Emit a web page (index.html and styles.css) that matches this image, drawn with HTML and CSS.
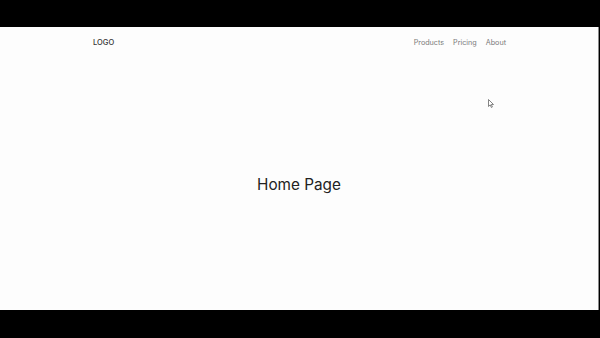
FILE: index.html
```html
<html>
  <head>
    <title>Home</title>
    <meta content="text/html;charset=utf-8" http-equiv="Content-Type">
    <link rel="stylesheet" href="styles.css">
  </head>
  <body>
    <div class="screen">
      <header class="topbar">
        <div class="logo">LOGO</div>
        <nav class="links">
          <a href="#">Products</a>
          <a href="#">Pricing</a>
          <a href="#">About</a>
        </nav>
      </header>
      <main class="hero">
        <h1>Home Page</h1>
      </main>
      <svg class="cursor" width="6" height="9" viewBox="0 0 6 9">
        <path d="M0.5 0.5 L0.5 7.5 L2.2 5.9 L3.4 8.5 L4.4 8 L3.3 5.5 L5.5 5.5 Z" fill="#fff" stroke="#666" stroke-width="0.8"/>
      </svg>
    </div>
  </body>
</html>
```

FILE: styles.css
```css
body {
  margin: 0;
  background-color: #000;
  font-family: Inter, "Liberation Sans", sans-serif;
}
.screen {
  position: relative;
  margin-top: 27px;
  width: 598px;
  height: 283px;
  border-right: 1px solid #8a8a8a;
  background-color: #fdfdfd;
  display: flex;
  flex-direction: column;
}
.topbar {
  height: 30px;
  padding: 0 92px 0 93px;
  display: flex;
  align-items: center;
  justify-content: space-between;
}
.logo {
  font-size: 7.5px;
  font-weight: 500;
  color: #333;
}
.links {
  display: flex;
  gap: 9px;
}
.links a {
  font-size: 7.2px;
  color: #7a7a7a;
  text-decoration: none;
}
.hero {
  flex: 1;
  padding-top: 2px;
  display: flex;
  align-items: center;
  justify-content: center;
}
.hero h1 {
  margin: 0;
  font-size: 15.3px;
  font-weight: 400;
  color: #222;
}
.cursor {
  position: absolute;
  left: 488px;
  top: 72px;
}
```
